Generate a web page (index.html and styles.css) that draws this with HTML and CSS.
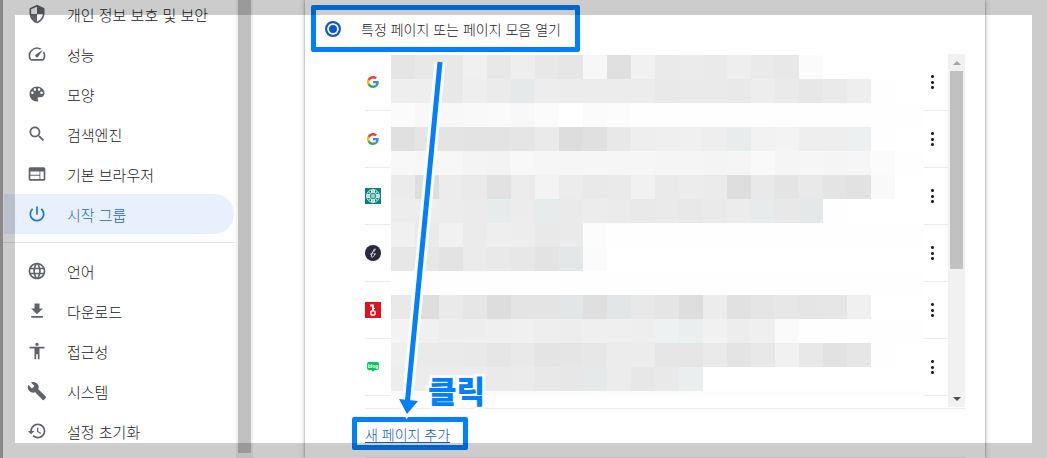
FILE: index.html
```html
<!DOCTYPE html>
<html lang="ko">
<head>
  <meta charset="UTF-8">
  <meta name="viewport" content="width=device-width, initial-scale=1.0">
  <title>설정 - 시작 그룹</title>
  <link rel="stylesheet" href="styles.css">
</head>
<body>
  <nav class="sidebar">
    <div class="menu">
      <a class="menu-item" href="#">
        <svg viewBox="0 0 24 24"><path d="M12 1L3 5v6c0 5.55 3.84 10.74 9 12 5.16-1.26 9-6.45 9-12V5l-9-4zm0 10.99h7c-.53 4.12-3.28 7.79-7 8.94V12H5V6.3l7-3.11v8.8z"></path></svg>
        개인 정보 보호 및 보안
      </a>
      <a class="menu-item" href="#">
        <svg viewBox="0 0 24 24"><path d="M20.38 8.57l-1.23 1.85a8 8 0 0 1-.22 7.58H5.07A8 8 0 0 1 15.58 6.85l1.85-1.23A10 10 0 0 0 3.35 19a2 2 0 0 0 1.72 1h13.85a2 2 0 0 0 1.74-1 10 10 0 0 0-.27-10.44zm-9.79 6.84a2 2 0 0 0 2.83 0l5.66-8.49-8.49 5.66a2 2 0 0 0 0 2.83z"></path></svg>
        성능
      </a>
      <a class="menu-item" href="#">
        <svg viewBox="0 0 24 24"><path d="M12 3c-4.97 0-9 4.03-9 9s4.03 9 9 9c.83 0 1.5-.67 1.5-1.5 0-.39-.15-.74-.39-1.01-.23-.26-.38-.61-.38-.99 0-.83.67-1.5 1.5-1.5H16c2.76 0 5-2.24 5-5 0-4.42-4.03-8-9-8zm-5.5 9c-.83 0-1.5-.67-1.5-1.5S5.67 9 6.5 9 8 9.67 8 10.5 7.33 12 6.5 12zm3-4C8.67 8 8 7.33 8 6.5S8.67 5 9.5 5s1.5.67 1.5 1.5S10.33 8 9.5 8zm5 0c-.83 0-1.5-.67-1.5-1.5S13.67 5 14.5 5s1.5.67 1.5 1.5S15.33 8 14.5 8zm3 4c-.83 0-1.5-.67-1.5-1.5S16.67 9 17.5 9s1.5.67 1.5 1.5-.67 1.5-1.5 1.5z"></path></svg>
        모양
      </a>
      <a class="menu-item" href="#">
        <svg viewBox="0 0 24 24"><path d="M15.5 14h-.79l-.28-.27C15.41 12.59 16 11.11 16 9.5 16 5.91 13.09 3 9.5 3S3 5.91 3 9.5 5.91 16 9.5 16c1.61 0 3.09-.59 4.23-1.57l.27.28v.79l5 4.99L20.49 19l-4.99-5zm-6 0C7.01 14 5 11.99 5 9.5S7.01 5 9.5 5 14 7.01 14 9.5 11.99 14 9.5 14z"></path></svg>
        검색엔진
      </a>
      <a class="menu-item" href="#">
        <svg viewBox="0 0 24 24"><path d="M20 4H4c-1.1 0-1.99.9-1.99 2L2 18c0 1.1.9 2 2 2h16c1.1 0 2-.9 2-2V6c0-1.1-.9-2-2-2zm-5 14H4v-4h11v4zm0-5H4V9h11v4zm5 5h-4V9h4v9z"></path></svg>
        기본 브라우저
      </a>
      <a class="menu-item active" href="#">
        <svg viewBox="0 0 24 24"><path d="M13 3h-2v10h2V3zm4.83 2.17l-1.42 1.42C17.99 7.86 19 9.81 19 12c0 3.87-3.13 7-7 7s-7-3.13-7-7c0-2.19 1.01-4.14 2.58-5.42L6.17 5.17C4.23 6.82 3 9.26 3 12c0 4.97 4.03 9 9 9s9-4.03 9-9c0-2.74-1.23-5.18-3.17-6.83z"></path></svg>
        시작 그룹
      </a>
      <hr class="menu-divider">
      <a class="menu-item" href="#">
        <svg viewBox="0 0 24 24"><path d="M11.99 2C6.47 2 2 6.48 2 12s4.47 10 9.99 10C17.52 22 22 17.52 22 12S17.52 2 11.99 2zm6.93 6h-2.95c-.32-1.25-.78-2.45-1.38-3.56 1.84.63 3.37 1.91 4.33 3.56zM12 4.04c.83 1.2 1.48 2.53 1.91 3.96h-3.82c.43-1.43 1.08-2.76 1.91-3.96zM4.26 14C4.1 13.36 4 12.69 4 12s.1-1.36.26-2h3.38c-.08.66-.14 1.32-.14 2s.06 1.34.14 2H4.26zm.82 2h2.95c.32 1.25.78 2.45 1.38 3.56-1.84-.63-3.37-1.9-4.33-3.56zm2.95-8H5.08c.96-1.66 2.49-2.93 4.33-3.56C8.81 5.55 8.35 6.75 8.03 8zM12 19.96c-.83-1.2-1.48-2.53-1.91-3.96h3.82c-.43 1.43-1.08 2.76-1.91 3.96zM14.34 14H9.66c-.09-.66-.16-1.32-.16-2s.07-1.35.16-2h4.68c.09.65.16 1.32.16 2s-.07 1.34-.16 2zm.25 5.56c.6-1.11 1.06-2.31 1.38-3.56h2.95c-.96 1.65-2.49 2.93-4.33 3.56zM16.36 14c.08-.66.14-1.32.14-2s-.06-1.34-.14-2h3.38c.16.64.26 1.31.26 2s-.1 1.36-.26 2h-3.38z"></path></svg>
        언어
      </a>
      <a class="menu-item" href="#">
        <svg viewBox="0 0 24 24"><path d="M19 9h-4V3H9v6H5l7 7 7-7zM5 18v2h14v-2H5z"></path></svg>
        다운로드
      </a>
      <a class="menu-item" href="#">
        <svg viewBox="0 0 24 24"><path d="M12 2c1.1 0 2 .9 2 2s-.9 2-2 2-2-.9-2-2 .9-2 2-2zm9 7h-6v13h-2v-6h-2v6H9V9H3V7h18v2z"></path></svg>
        접근성
      </a>
      <a class="menu-item" href="#">
        <svg viewBox="0 0 24 24"><path d="M22.7 19l-9.1-9.1c.9-2.3.4-5-1.5-6.9-2-2-5-2.4-7.4-1.3L9 6 6 9 1.6 4.7C.4 7.1.9 10.1 2.9 12.1c1.9 1.9 4.6 2.4 6.9 1.5l9.1 9.1c.4.4 1 .4 1.4 0l2.3-2.3c.5-.4.5-1.1.1-1.4z"></path></svg>
        시스템
      </a>
      <a class="menu-item" href="#">
        <svg viewBox="0 0 24 24"><path d="M13 3c-4.97 0-9 4.03-9 9H1l3.89 3.89.07.14L9 12H6c0-3.87 3.13-7 7-7s7 3.13 7 7-3.13 7-7 7c-1.93 0-3.68-.79-4.94-2.06l-1.42 1.42C8.27 19.99 10.51 21 13 21c4.97 0 9-4.03 9-9s-4.03-9-9-9zm-1 5v5l4.28 2.54.72-1.21-3.5-2.08V8H12z"></path></svg>
        설정 초기화
      </a>
    </div>
    <div class="scrollbar"><div class="thumb"></div></div>
  </nav>

  <main class="content">
    <div class="card">
      <label class="option highlight">
        <input type="radio" name="startup" checked>
        특정 페이지 또는 페이지 모음 열기
      </label>

      <div class="pages">
        <div class="page-list">
          <div class="page-row">
            <svg class="favicon" viewBox="0 0 64 64"><use href="#google"></use></svg>
            <button class="more-btn" aria-label="추가 작업"></button>
          </div>
          <div class="page-row">
            <svg class="favicon" viewBox="0 0 64 64"><use href="#google"></use></svg>
            <button class="more-btn" aria-label="추가 작업"></button>
          </div>
          <div class="page-row">
            <svg class="favicon" viewBox="0 0 16 16">
              <rect width="16" height="16" fill="#0b7f7c"></rect>
              <circle cx="8" cy="8" r="6.5" fill="#0b7f7c" stroke="#c5e8e3" stroke-width="1"></circle>
              <path d="M6 2h4v3H6zM6 11h4v3H6zM2 6h3v4H2zM11 6h3v4h-3zM6.3 6.3h3.4v3.4H6.3z" fill="#d8f0ec"></path>
              <path d="M3.5 3.5l2.8 2.8M12.5 3.5L9.700 6.3M3.500 12.500l2.800-2.800M12.500 12.500L9.700 9.700" stroke="#a5d6d0" stroke-width="1.200"></path>
              <path d="M8 2v12M2 8h12" stroke="#6fb8b2" stroke-width=".6"></path>
            </svg>
            <button class="more-btn" aria-label="추가 작업"></button>
          </div>
          <div class="page-row">
            <svg class="favicon" viewBox="0 0 16 16">
              <circle cx="8" cy="8" r="8" fill="#2a293b"></circle>
              <path d="M5 9.500C8 8 10.500 5 10.200 3.800 9.500 3 7 8 6.300 11.200c-.2 1.500 1.500 1.300 2.600-.2 1-1.500.8-2.700-.3-2.300M9 9.500l2-.8" fill="none" stroke="#e4e4ea" stroke-width=".9"></path>
            </svg>
            <button class="more-btn" aria-label="추가 작업"></button>
          </div>
          <div class="page-row">
            <svg class="favicon" viewBox="0 0 16 16">
              <rect width="16" height="16" fill="#e0121f"></rect>
              <path d="M5 3.500h3V9" fill="none" stroke="#fff" stroke-width="2"></path>
              <path d="M8 6.500h2" stroke="#fff" stroke-width="1"></path>
              <circle cx="8" cy="11" r="2.200" fill="none" stroke="#fff" stroke-width="1.500"></circle>
            </svg>
            <button class="more-btn" aria-label="추가 작업"></button>
          </div>
          <div class="page-row">
            <svg class="favicon" viewBox="0 0 16 16">
              <path d="M4 3h8q2 0 2 2v4q0 2-2 2H9.500L8 13l-1.500-2H4q-2 0-2-2V5q0-2 2-2z" fill="#03c75a"></path>
              <text class="blog-text" x="8" y="9" text-anchor="middle">blog</text>
            </svg>
            <button class="more-btn" aria-label="추가 작업"></button>
          </div>
          <div class="mosaic" id="mosaic"></div>
        </div>
        <div class="scrollbar list-scrollbar">
          <span class="arrow-up"></span>
          <div class="thumb"></div>
          <span class="arrow-down"></span>
        </div>
      </div>

      <div class="add-row">
        <a class="add-link highlight" href="#">새 페이지 추가</a>
      </div>

      <!-- 안내 화살표 -->
      <svg class="guide-arrow" viewBox="0 0 40 370">
        <path d="M45 5L12 349" class="arrow-edge" stroke-width="11"></path>
        <path d="M4 342l19 2-11 13z" class="arrow-edge" stroke-width="6"></path>
        <path d="M45 5L12 349" stroke="#0080ff" stroke-width="5"></path>
        <path d="M4 342l19 2-11 13z" fill="#0080ff"></path>
      </svg>
      <span class="guide-text">클릭</span>
    </div>
  </main>

  <div class="page-frame"></div>

  <svg class="defs">
    <symbol id="google" viewBox="-8 -8 64 64">
      <path fill="#EA4335" d="M24 9.500c3.540 0 6.710 1.220 9.210 3.600l6.850-6.850C35.900 2.380 30.470 0 24 0 14.620 0 6.510 5.380 2.560 13.220l7.980 6.190C12.430 13.720 17.740 9.500 24 9.500z"></path>
      <path fill="#4285F4" d="M46.980 24.550c0-1.570-.15-3.090-.38-4.550H24v9.020h12.940c-.58 2.960-2.260 5.480-4.780 7.180l7.730 6c4.510-4.180 7.090-10.360 7.090-17.650z"></path>
      <path fill="#FBBC05" d="M10.530 28.590c-.48-1.450-.76-2.990-.76-4.590s.27-3.140.76-4.590l-7.980-6.190C.92 16.460 0 20.120 0 24c0 3.880.92 7.540 2.560 10.780l7.970-6.190z"></path>
      <path fill="#34A853" d="M24 48c6.480 0 11.930-2.130 15.890-5.810l-7.730-6c-2.150 1.450-4.920 2.300-8.160 2.300-6.260 0-11.570-4.220-13.470-9.910l-7.980 6.190C6.510 42.620 14.620 48 24 48z"></path>
    </symbol>
  </svg>

  <script src="mosaic.js"></script>
</body>
</html>
```
FILE: styles.css
```css
* {
  box-sizing: border-box;
}
body {
  margin: 0;
  height: 100vh;
  display: flex;
  overflow: hidden;
  background: #fff;
  border-left: 3px solid #aaa;
  color: #202124;
  font-family: "Noto Sans CJK KR", sans-serif;
  font-size: 14px;
  font-weight: 300;
}
.sidebar {
  display: flex;
  width: 250px;
  flex-shrink: 0;
  overflow: hidden;
}
.menu {
  flex: 1;
  margin-top: -6px;
}
.menu-item {
  display: flex;
  align-items: center;
  gap: 20px;
  height: 40px;
  margin: 0 2px 0 1px;
  padding-left: 23px;
  border-radius: 0 20px 20px 0;
  color: #202124;
  font-size: 15px;
  text-decoration: none;
}
.menu-item svg {
  width: 20px;
  height: 20px;
  fill: #5f6368;
}
.menu-item.active {
  background: #e8f0fe;
  color: #1967d2;
}
.menu-item.active svg {
  fill: #1a73e8;
}
.menu-divider {
  height: 1px;
  margin: 8px 0;
  border: none;
  background: #e4e4e4;
}
.scrollbar {
  width: 17px;
  padding: 0 2px;
  flex-shrink: 0;
  background: #f1f1f1;
}
.thumb {
  height: 99%;
  background: #c1c1c1;
}
.content {
  flex: 1;
  padding: 0 62px 0 52px;
}
.card {
  position: relative;
  height: 100vh;
  padding: 5px 20px 0 60px;
  background: #fff;
  box-shadow: 0 0 2px rgba(60, 64, 67, 0.5), 0 1px 5px 1px rgba(60, 64, 67, 0.2);
}
.highlight {
  border: 5px solid #0080ff;
  border-radius: 2px;
}
.option {
  display: flex;
  align-items: center;
  gap: 20px;
  width: fit-content;
  height: 47px;
  margin-left: -54px;
  padding: 0 14px 0 9px;
}
.option input {
  appearance: none;
  width: 16px;
  height: 16px;
  margin: 0;
  border: 2px solid #0b57d0;
  border-radius: 50%;
  background: #0b57d0;
  box-shadow: inset 0 0 0 2px #fff;
}
.pages {
  display: flex;
  margin-top: 2px;
  padding-bottom: 1px;
  border-bottom: 1px solid #ebebeb;
}
.page-list {
  position: relative;
  flex: 1;
  height: 353px;
}
.page-row {
  display: flex;
  align-items: center;
  justify-content: space-between;
  height: 57px;
  border-bottom: 1px solid #ebebeb;
}
.favicon {
  width: 16px;
  height: 16px;
}
.blog-text {
  fill: #fff;
  font: bold 5px "Liberation Sans", sans-serif;
}
.more-btn {
  width: 32px;
  height: 32px;
  padding: 0;
  border: none;
  background: radial-gradient(circle, #202124 1px, transparent 2px) center / 5px 5px no-repeat,
    radial-gradient(circle, #202124 1px, transparent 2px) center top 8px / 5px 5px no-repeat,
    radial-gradient(circle, #202124 1px, transparent 2px) center bottom 8px / 5px 5px no-repeat;
  cursor: pointer;
}
/* 가려진 주소 영역 */
.mosaic {
  position: absolute;
  top: 1px;
  left: 26px;
  right: 24px;
  height: 342px;
  display: grid;
  grid-template-columns: repeat(23, 24px);
  grid-auto-rows: 24px;
  overflow: hidden;
}
.list-scrollbar {
  display: flex;
  flex-direction: column;
  align-items: center;
}
.list-scrollbar .thumb {
  width: 100%;
  height: 56%;
  margin-bottom: auto;
}
.arrow-up,
.arrow-down {
  margin: 7px 0 6px;
  border: 4px solid transparent;
}
.arrow-up {
  border-top: none;
  border-bottom-color: #a3a3a3;
}
.arrow-down {
  border-bottom: none;
  border-top-color: #505050;
}
.add-row {
  height: 49px;
  padding-top: 8px;
  border-bottom: 1px solid #ebebeb;
}
.add-link {
  display: flex;
  align-items: center;
  width: fit-content;
  height: 33px;
  margin-left: -13px;
  padding: 0 13px 0 8px;
  color: #0b57d0;
  text-underline-offset: 2px;
}
.guide-arrow {
  position: absolute;
  left: 90px;
  top: 57px;
  width: 40px;
  height: 370px;
  overflow: visible;
  pointer-events: none;
}
.arrow-edge {
  fill: #fff;
  stroke: #fff;
}
.guide-text {
  position: absolute;
  left: 123px;
  top: 370px;
  color: #0080ff;
  font-size: 31px;
  line-height: 40px;
  font-weight: 900;
  -webkit-text-stroke: 5px #fff;
  paint-order: stroke fill;
}
.page-frame {
  position: fixed;
  inset: 0;
  border: 15px solid rgba(0, 0, 0, 0.2);
  pointer-events: none;
}
.defs {
  position: absolute;
  width: 0;
  height: 0;
}
```
FILE: mosaic.js
```js
// 한 글자 = 한 칸의 밝기 (36진수, 220부터), 대문자는 약간 푸른 회색
const rows = [
  '9cckcicar4lefeiecvzzzzz',
  'iicifDhggggdeedhebeiyzz',
  'vsstusvzvwyyyyyyyyyyyyy',
  '498779e14cijkiGmniiKyzz',
  'srronsqqqqqppoptpqpqvyy',
  'f2ge6gngdelegf2d8d86tzz',
  'hhgfFgFegfdecegFcCyzzzz',
  'kelfihdewyyyyyyyyyyyyyy',
  'bb7fdb7Bvzzzzzzzzzzzzzz',
  'yyyyyyyyyyyyyyyyyyyyyyy',
  'd2ea188A3Ac92g59b9akzzz',
  'nkhhjkihjjiLIlhjuyyyyyy',
  'jeedad89bggaae8clc6ayzz',
  'hgggefcbDgbdIzzzzzzzzzz',
  'wwwwwwwwwwwwwwwwwwwwwww'
];

const mosaic = document.getElementById('mosaic');

rows.join('').split('').forEach(c => {
  const v = 220 + parseInt(c, 36);
  const red = /[A-Z]/.test(c) ? v - 3 : v;
  const cell = document.createElement('div');
  cell.style.background = `rgb(${red}, ${v}, ${v})`;
  mosaic.appendChild(cell);
});
```
